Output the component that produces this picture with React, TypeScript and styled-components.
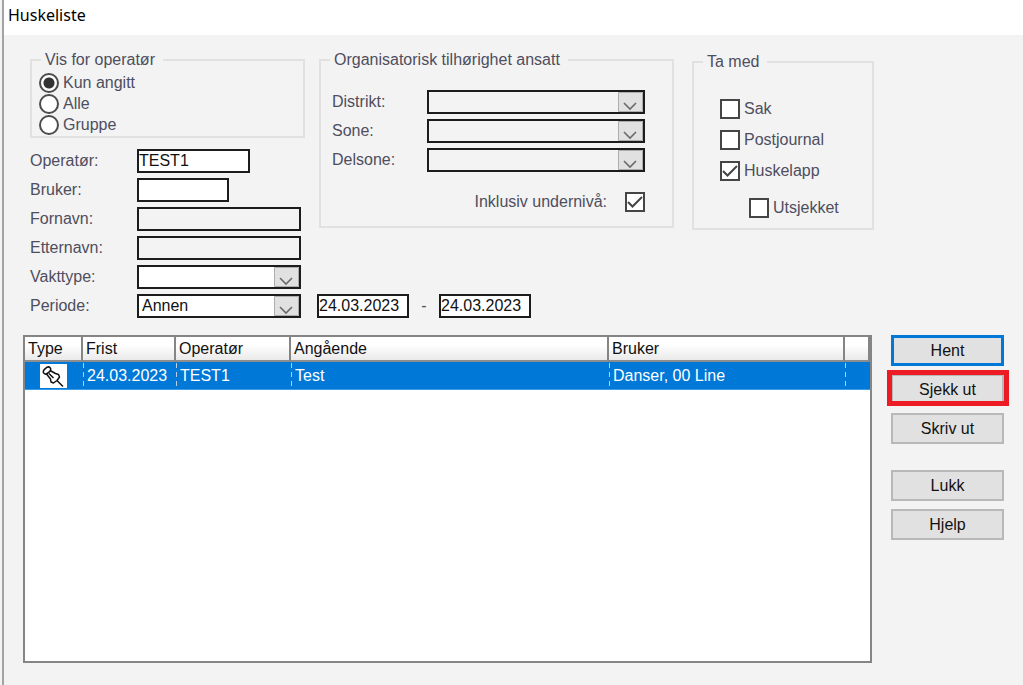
import React, { useState } from 'react';
import styled, { createGlobalStyle, css } from 'styled-components';

const GlobalStyle = createGlobalStyle`
  * { box-sizing: border-box; }
  body {
    margin: 0;
    background: #f3f3f3;
    font-family: "Liberation Sans", Arial, sans-serif;
    font-size: 16px;
    line-height: 20px;
    color: #4e4e5e;
  }
  button, input, select { font: inherit; margin: 0; }
`;

const Dialog = styled.div`
  display: flex;
  flex-direction: column;
  min-height: 100vh;
  margin-left: 2px;
  border-left: 2px solid #a3a3a3;
`;

const TitleBar = styled.header`
  height: 35px;
  padding: 5px 4px;
  background: #fff;
`;

const Title = styled.h1`
  margin: 0;
  font: 400 16px/20px "Noto Sans", "Open Sans", sans-serif;
  color: #000;
`;

const Content = styled.form`
  display: flex;
  flex: 1;
  flex-direction: column;
  padding: 15px 19px 22px 19px;
`;

const Filters = styled.div`
  display: flex;
  align-items: flex-start;
  padding: 0 7px;
`;

const OperatorColumn = styled.div`
  width: 275px;
  margin-right: 14px;
`;

const Group = styled.fieldset`
  min-width: 0;
  margin: 0;
  border: 2px solid #e1e1e1;
`;

const OperatorGroup = styled(Group)`
  height: 88px;
  padding: 2px 7px;
`;

const OrgGroup = styled(Group)`
  width: 355px;
  height: 178px;
  margin-right: 18px;
  padding: 20px 27px 0 11px;
`;

const IncludeGroup = styled(Group)`
  width: 182px;
  height: 178px;
  margin-top: 2px;
  padding: 26px;
`;

const Legend = styled.legend`
  padding: 0 8px 0 4px;
`;

const OperatorLegend = styled(Legend)`
  margin-left: 2px;
`;

const OrgLegend = styled(Legend)`
  margin-left: -2px;
`;

const IncludeLegend = styled(Legend)`
  margin-left: -17px;
`;

const Choice = styled.label<{ $gap?: number; $indent?: boolean }>`
  display: flex;
  align-items: center;
  gap: 4px;
  height: 21px;
  margin-bottom: ${p => p.$gap ?? 0}px;
  margin-left: ${p => (p.$indent ? 29 : 0)}px;
`;

const Radio = styled.input.attrs({ type: 'radio' })`
  appearance: none;
  width: 20px;
  height: 20px;
  border: 2px solid #4c4c4c;
  border-radius: 50%;
  background: #fff;
  &:checked { background: radial-gradient(circle, #333 5px, #fff 6px); }
`;

const CheckBox = styled.span`
  position: relative;
  display: flex;
  width: 20px;
  height: 20px;
  input {
    appearance: none;
    width: 20px;
    height: 20px;
    border: 2px solid #454545;
    background: #fff;
  }
  svg {
    position: absolute;
    inset: 0;
    pointer-events: none;
    visibility: hidden;
  }
  input:checked + svg { visibility: visible; }
`;

const Fields = styled.div`
  display: flex;
  flex-direction: column;
  gap: 5px;
`;

const OperatorFields = styled(Fields)`
  margin-top: 11px;
`;

const FieldRow = styled.div<{ $label?: number }>`
  display: grid;
  grid-template-columns: ${p => p.$label ?? 107}px 1fr;
  align-items: center;
  height: 24px;
`;

const PeriodRow = styled.div`
  display: flex;
  align-items: center;
  height: 24px;
  margin: 5px 7px 0;
`;

const PeriodLabel = styled.label`
  width: 107px;
`;

const DateRange = styled.div`
  display: flex;
  align-items: center;
  margin-left: 16px;
`;

const Dash = styled.span`
  width: 30px;
  text-align: center;
`;

const boxStyle = css<{ $width?: number; $muted?: boolean }>`
  width: ${p => (p.$width ? `${p.$width}px` : '100%')};
  height: 24px;
  border: 2px solid #1c1c1c;
  border-radius: 0;
  background: ${p => (p.$muted ? '#f3f3f3' : '#fff')};
  color: #111;
  outline: none;
`;

const TextBox = styled.input<{ $width?: number; $muted?: boolean }>`
  ${boxStyle}
  padding: 0;
`;

const SelectFrame = styled.span<{ $width?: number }>`
  position: relative;
  display: block;
  width: ${p => (p.$width ? `${p.$width}px` : '100%')};
  height: 24px;
  svg {
    position: absolute;
    top: 2px;
    right: 2px;
    pointer-events: none;
  }
`;

const SelectBox = styled.select<{ $muted?: boolean }>`
  ${boxStyle}
  appearance: none;
  padding: 0 26px 0 3px;
`;

const InclusiveRow = styled.label`
  display: flex;
  align-items: center;
  justify-content: flex-end;
  gap: 18px;
  height: 20px;
  margin-top: 20px;
`;

const Results = styled.div`
  display: flex;
  flex: 1;
  gap: 19px;
  margin-top: 17px;
`;

const ListBox = styled.div`
  flex: 1;
  border: 2px solid #858585;
  background: #fff;
`;

const Table = styled.table`
  width: 100%;
  border-collapse: separate;
  border-spacing: 0;
  table-layout: fixed;
  color: #111;
`;

const Col = styled.col<{ $width?: number }>`
  width: ${p => (p.$width ? `${p.$width}px` : 'auto')};
`;

const HeadCell = styled.th`
  height: 25px;
  padding: 0 3px;
  border-right: 2px solid #858585;
  border-bottom: 2px solid #8d8d8d;
  background: linear-gradient(#fff 35%, #e9e9e9);
  font-weight: 400;
  text-align: left;
  white-space: nowrap;
`;

const Cell = styled.td`
  height: 28px;
  padding: 0 4px;
  border-bottom: 1px solid #3c9be6;
  background: #0078d7;
  color: #fff;
  white-space: nowrap;
  & + & {
    background: repeating-linear-gradient(#b9cfe4 0 5px, #0078d7 5px 9px) 0 1px / 1px 23px no-repeat #0078d7;
  }
`;

const Pin = styled.svg`
  display: block;
  margin-left: 11px;
  background: #fff;
`;

const Actions = styled.div`
  display: flex;
  flex-direction: column;
  gap: 8px;
  width: 113px;
`;

const Button = styled.button<{ $primary?: boolean; $marked?: boolean; $apart?: boolean }>`
  position: relative;
  height: 31px;
  margin-top: ${p => (p.$apart ? 18 : 0)}px;
  padding: 0;
  border: ${p => (p.$primary ? '3px solid #0078d7' : '2px solid #b8b8b8')};
  border-radius: 0;
  background: #e1e1e1;
  color: #111;
  ${p => p.$marked && css`
    &::after {
      content: '';
      position: absolute;
      inset: -6px -7px -3px -6px;
      border: 5px solid #ed1c24;
    }
  `}
`;

function Check(props: React.InputHTMLAttributes<HTMLInputElement>) {
  return (
    <CheckBox>
      <input type="checkbox" {...props} />
      <svg width="20" height="20" viewBox="0 0 20 20" fill="none" stroke="#444" strokeWidth="2" aria-hidden="true">
        <path d="M3 10L7.500 14.500L17 5" />
      </svg>
    </CheckBox>
  );
}

function Select({ id, width, muted, children }: { id: string; width?: number; muted?: boolean; children?: React.ReactNode }) {
  return (
    <SelectFrame $width={width}>
      <SelectBox id={id} $muted={muted}>{children}</SelectBox>
      <svg width="25" height="20" viewBox="0 0 25 20" fill="none" aria-hidden="true">
        <path d="M0.500 0.500H24.500V19.500H0.500Z" fill="#e1e1e1" stroke="#adadad" />
        <path d="M6 11L12 17L18 11" stroke="#6a6a6a" strokeWidth="1.600" />
      </svg>
    </SelectFrame>
  );
}

export default function App() {
  const [scope, setScope] = useState('Kun angitt');
  return (
    <>
      <GlobalStyle />
      <Dialog>
        <TitleBar><Title>Huskeliste</Title></TitleBar>
        <Content onSubmit={e => e.preventDefault()}>
          <Filters>
            <OperatorColumn>
              <OperatorGroup>
                <OperatorLegend>Vis for operatør</OperatorLegend>
                {['Kun angitt', 'Alle', 'Gruppe'].map(name => (
                  <Choice key={name}>
                    <Radio name="scope" checked={scope === name} onChange={() => setScope(name)} />
                    {name}
                  </Choice>
                ))}
              </OperatorGroup>
              <OperatorFields>
                <FieldRow><label htmlFor="operator">Operatør:</label><TextBox id="operator" $width={113} defaultValue="TEST1" /></FieldRow>
                <FieldRow><label htmlFor="user">Bruker:</label><TextBox id="user" $width={92} /></FieldRow>
                <FieldRow><label htmlFor="first">Fornavn:</label><TextBox id="first" $width={164} $muted readOnly /></FieldRow>
                <FieldRow><label htmlFor="last">Etternavn:</label><TextBox id="last" $width={164} $muted readOnly /></FieldRow>
                <FieldRow><label htmlFor="shift">Vakttype:</label><Select id="shift" width={164} /></FieldRow>
              </OperatorFields>
            </OperatorColumn>

            <OrgGroup>
              <OrgLegend>Organisatorisk tilhørighet ansatt</OrgLegend>
              <Fields>
                <FieldRow $label={95}><label htmlFor="district">Distrikt:</label><Select id="district" muted /></FieldRow>
                <FieldRow $label={95}><label htmlFor="zone">Sone:</label><Select id="zone" muted /></FieldRow>
                <FieldRow $label={95}><label htmlFor="subzone">Delsone:</label><Select id="subzone" muted /></FieldRow>
              </Fields>
              <InclusiveRow>Inklusiv undernivå:<Check defaultChecked /></InclusiveRow>
            </OrgGroup>

            <IncludeGroup>
              <IncludeLegend>Ta med</IncludeLegend>
              <Choice $gap={10}><Check />Sak</Choice>
              <Choice $gap={10}><Check />Postjournal</Choice>
              <Choice $gap={16}><Check defaultChecked />Huskelapp</Choice>
              <Choice $indent><Check />Utsjekket</Choice>
            </IncludeGroup>
          </Filters>

          <PeriodRow>
            <PeriodLabel htmlFor="period">Periode:</PeriodLabel>
            <Select id="period" width={164}><option>Annen</option></Select>
            <DateRange>
              <TextBox aria-label="Fra dato" $width={92} defaultValue="24.03.2023" />
              <Dash>-</Dash>
              <TextBox aria-label="Til dato" $width={92} defaultValue="24.03.2023" />
            </DateRange>
          </PeriodRow>

          <Results>
            <ListBox>
              <Table>
                <colgroup>
                  <Col $width={58} /><Col $width={93} /><Col $width={115} /><Col /><Col $width={236} /><Col $width={25} />
                </colgroup>
                <thead>
                  <tr>
                    <HeadCell>Type</HeadCell>
                    <HeadCell>Frist</HeadCell>
                    <HeadCell>Operatør</HeadCell>
                    <HeadCell>Angående</HeadCell>
                    <HeadCell>Bruker</HeadCell>
                    <HeadCell />
                  </tr>
                </thead>
                <tbody>
                  <tr>
                    <Cell>
                      <Pin width="27" height="24" viewBox="0 0 27 24" fill="none" stroke="#111" strokeWidth="1.500" strokeLinejoin="round" role="img" aria-label="Huskelapp">
                        <ellipse cx="7" cy="6.500" rx="4.200" ry="2.600" transform="rotate(-42 7 6.500)" />
                        <path d="M10 6.500L15.500 9.500L18.500 10.500L19.500 13L17 16.500L13.500 19L11 18L10.500 15L6.500 10" />
                        <path d="M9 9.500L13.500 14M17 16.500L23 22.500" />
                      </Pin>
                    </Cell>
                    <Cell>24.03.2023</Cell>
                    <Cell>TEST1</Cell>
                    <Cell>Test</Cell>
                    <Cell>Danser, 00 Line</Cell>
                    <Cell />
                  </tr>
                </tbody>
              </Table>
            </ListBox>
            <Actions>
              <Button type="submit" $primary>Hent</Button>
              <Button type="button" $marked>Sjekk ut</Button>
              <Button type="button">Skriv ut</Button>
              <Button type="button" $apart>Lukk</Button>
              <Button type="button">Hjelp</Button>
            </Actions>
          </Results>
        </Content>
      </Dialog>
    </>
  );
}
